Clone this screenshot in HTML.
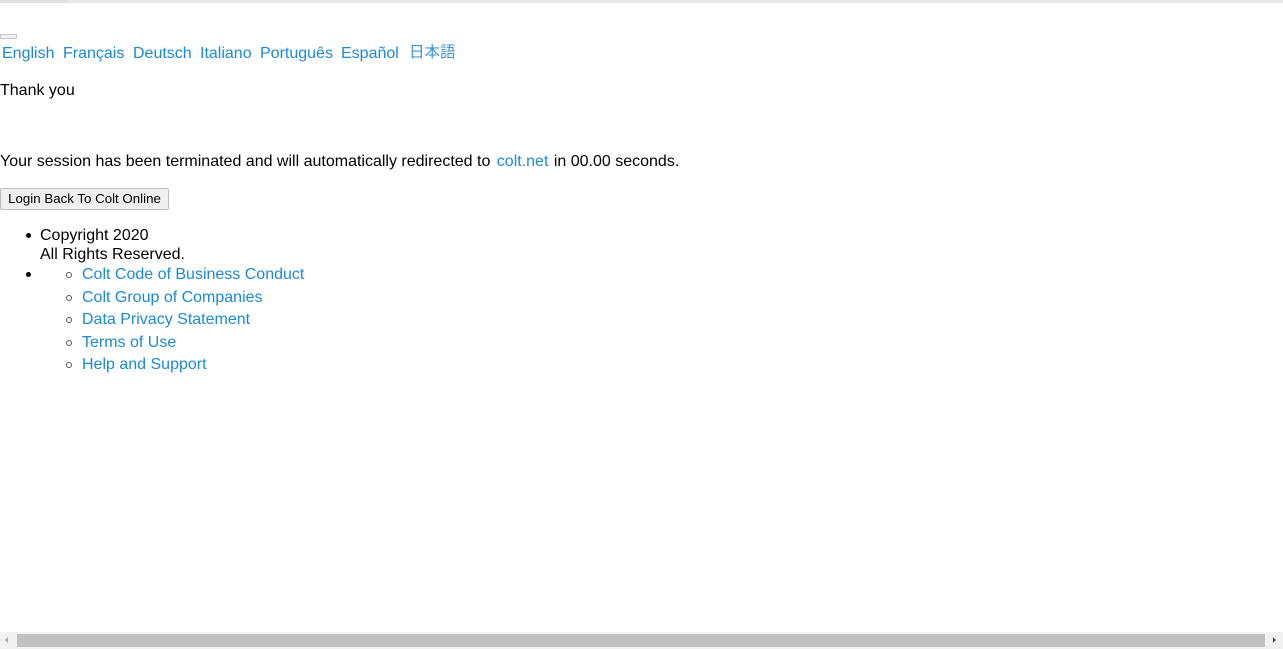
<!DOCTYPE html>
<html><head><meta charset="utf-8"><style>
html,body{margin:0;padding:0;width:1283px;height:649px;overflow:hidden;background:#fff;font-family:"Liberation Sans","Noto Sans CJK JP",sans-serif;font-size:16px;color:#000}
.a{position:absolute;white-space:nowrap;line-height:20px}
.l{color:#1b8ad4}
.top{position:absolute;left:0;top:0;width:1283px;height:3px;background:#e8eaec}
.top2{position:absolute;left:0;top:0;width:70px;height:3px;background:#dfe1e3}
.sb{position:absolute;left:0;top:632px;width:1283px;height:17px;background:#f1f1f1}
.th{position:absolute;left:17px;top:634px;width:1248px;height:13px;background:#c1c1c1}
.btn{position:absolute;left:0;top:188px;width:167px;height:20px;border:1px solid #bdbdbd;background:#efefef;font-size:13.3px;line-height:20px;text-align:center;border-radius:2px}
.dot{position:absolute;width:5px;height:5px;border-radius:50%;background:#000}
.cir{position:absolute;width:4px;height:4px;border-radius:50%;border:1px solid #555}
</style></head><body>
<div class="top"></div><div class="top2"></div>
<div style="position:absolute;left:0;top:34px;width:15px;height:3px;border:1px solid #c8c8c8;background:#f0f0f0"></div>
<span class="a l" style="left:2px;top:44px">English</span>
<span class="a l" style="left:63px;top:44px">Français</span>
<span class="a l" style="left:133px;top:44px">Deutsch</span>
<span class="a l" style="left:200px;top:44px">Italiano</span>
<span class="a l" style="left:260px;top:44px">Português</span>
<span class="a l" style="left:341px;top:44px">Español</span>
<span class="a l" style="left:409px;top:43px;color:#3a95d6;font-size:15.5px">日本語</span>
<span class="a" style="left:0;top:81px">Thank you</span>
<span class="a" style="left:0;top:152px">Your session has been terminated and will automatically redirected to <span class="l" style="margin-left:2px">colt.net</span> <span style="margin-left:1px">in 00.00 seconds.</span></span>
<div class="btn">Login Back To Colt Online</div>
<div class="dot" style="left:26px;top:233px"></div>
<span class="a" style="left:40px;top:226px">Copyright 2020</span>
<span class="a" style="left:40px;top:245px">All Rights Reserved.</span>
<div class="dot" style="left:26px;top:272px"></div>
<div class="cir" style="left:66px;top:272px"></div><span class="a l" style="left:82px;top:265px">Colt Code of Business Conduct</span>
<div class="cir" style="left:66px;top:295px"></div><span class="a l" style="left:82px;top:288px">Colt Group of Companies</span>
<div class="cir" style="left:66px;top:317px"></div><span class="a l" style="left:82px;top:310px">Data Privacy Statement</span>
<div class="cir" style="left:66px;top:340px"></div><span class="a l" style="left:82px;top:333px">Terms of Use</span>
<div class="cir" style="left:66px;top:362px"></div><span class="a l" style="left:82px;top:355px">Help and Support</span>
<div class="sb"></div><div class="th"></div>
<div style="position:absolute;left:5px;top:637px;width:0;height:0;border-top:3px solid transparent;border-bottom:3px solid transparent;border-right:3px solid #a3a3a3"></div>
<div style="position:absolute;left:1273px;top:637px;width:0;height:0;border-top:3px solid transparent;border-bottom:3px solid transparent;border-left:3px solid #505050"></div>
</body></html>
